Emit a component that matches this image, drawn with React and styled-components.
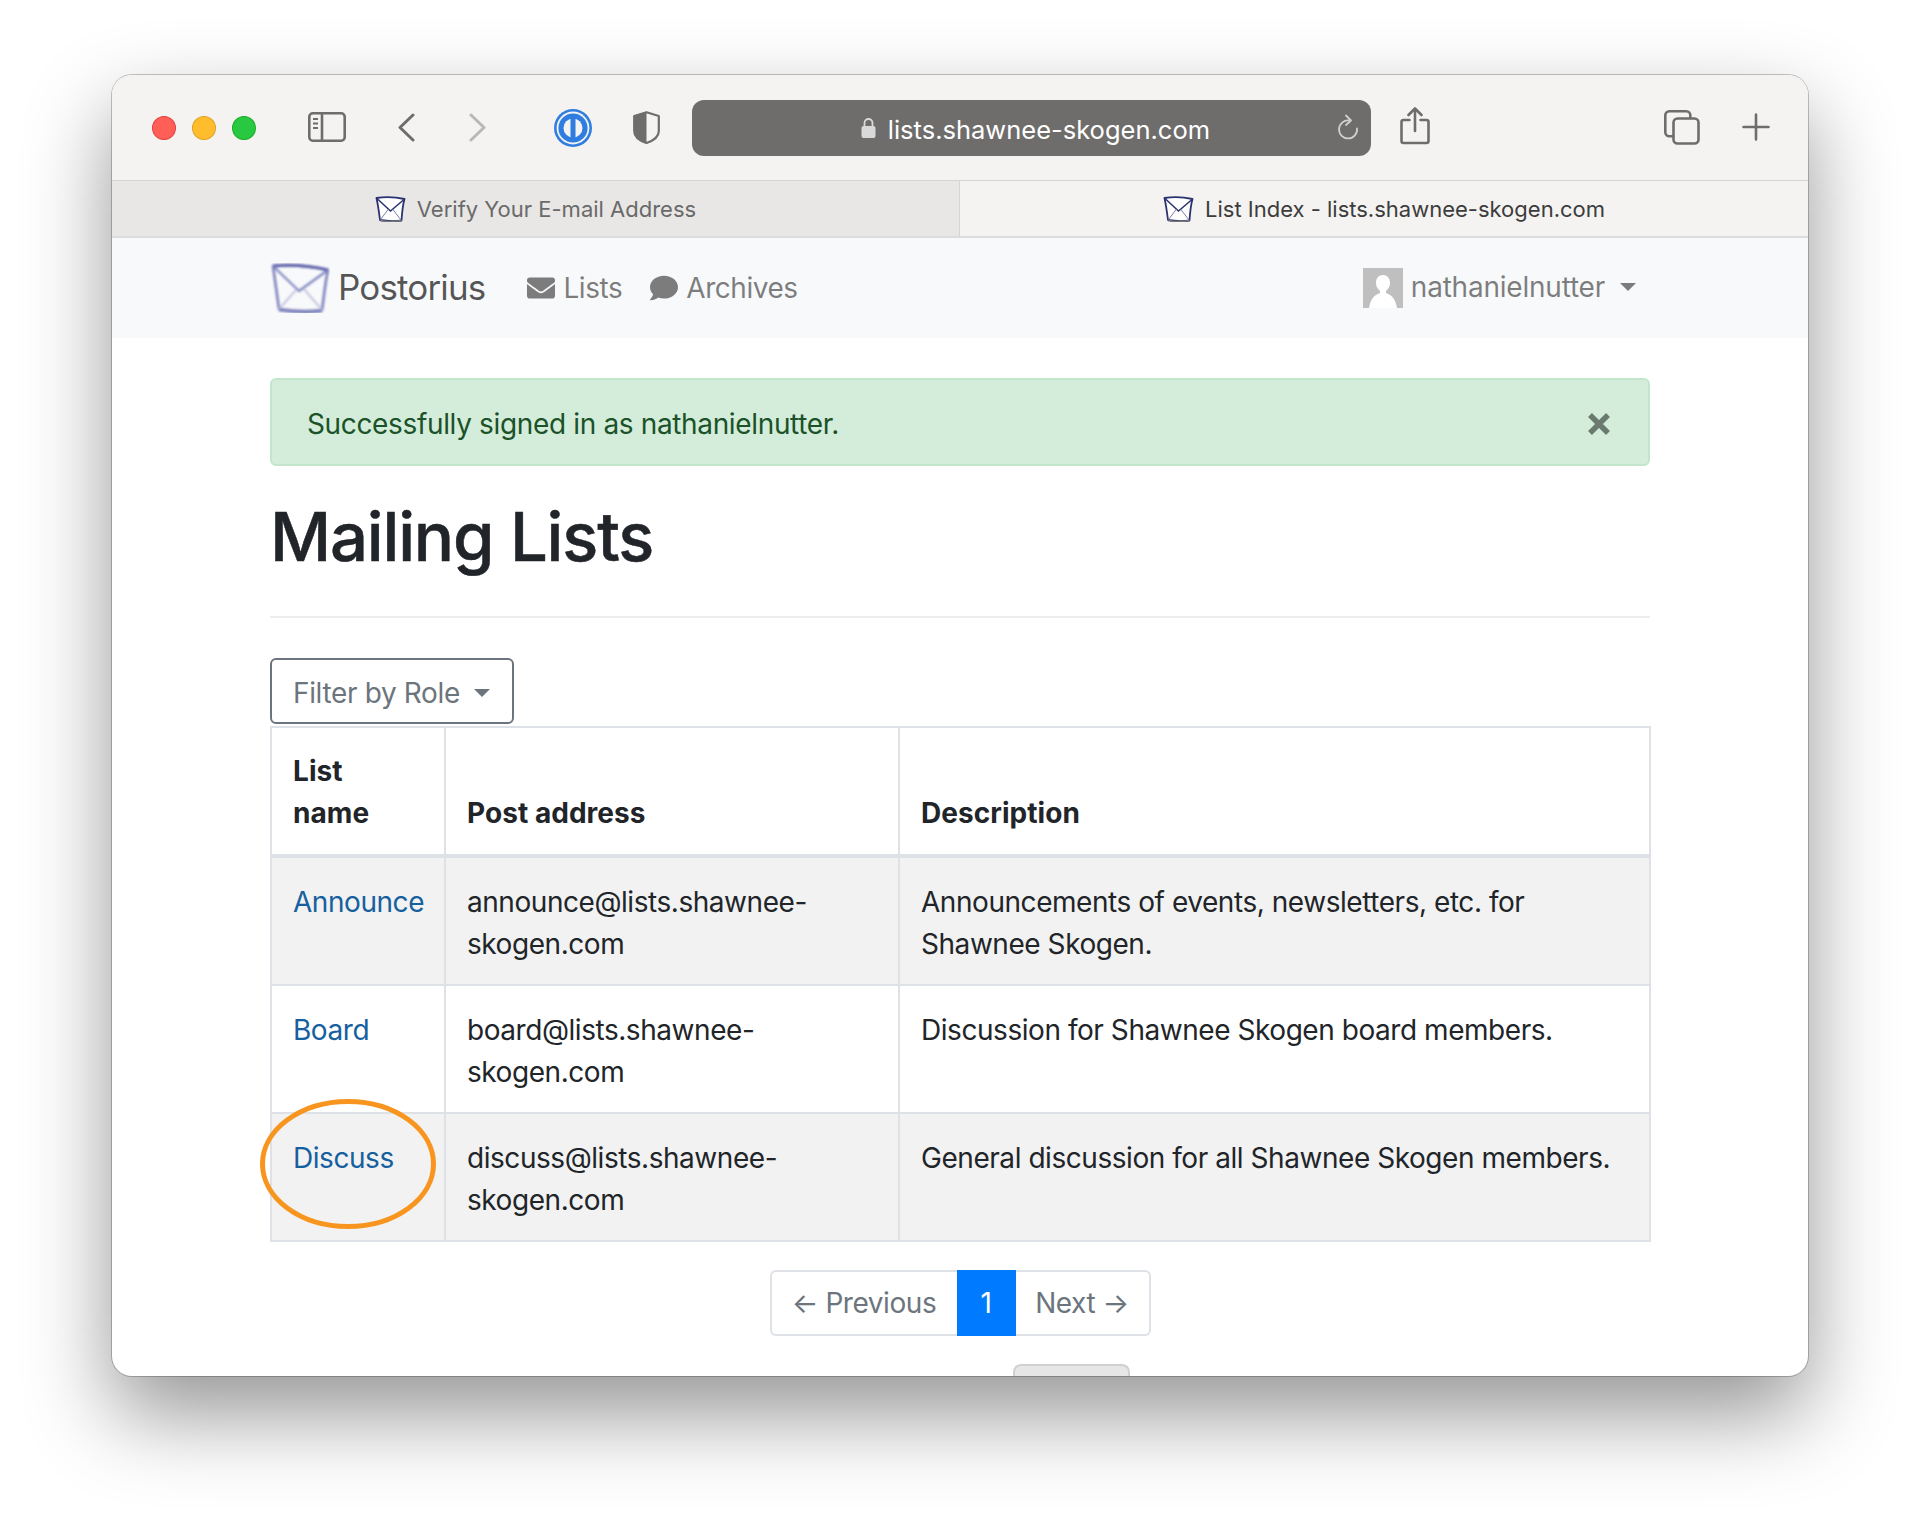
import styled, { createGlobalStyle } from "styled-components";
import { FaEnvelope, FaComment } from "react-icons/fa";

const Global = createGlobalStyle`
  html, body { margin: 0; background: #fff; }
  body { font-family: Inter, "Liberation Sans", sans-serif; color: #212529; }
  * { box-sizing: border-box; }
`;

const Page = styled.div`
  width: 1920px;
  height: 1524px;
  padding: 75px 112px 0;
  overflow: hidden;
`;

const Window = styled.div`
  width: 1696px;
  height: 1301px;
  border-radius: 20px;
  background: #fff;
  overflow: hidden;
  box-shadow: 0 0 0 1px rgba(0, 0, 0, .22), 0 38px 85px rgba(0, 0, 0, .42);
`;

const Toolbar = styled.div`
  height: 105px;
  background: #f4f3f1;
  display: flex;
  align-items: flex-start;
  padding: 25px 38px 0 40px;
  position: relative;
`;

const Light = styled.span`
  width: 24px;
  height: 24px;
  margin: 16px 16px 0 0;
  border-radius: 50%;
  background: ${p => p.$color};
  border: 1px solid ${p => p.$edge};
`;

const ToolIcon = styled.svg`
  display: block;
  flex: none;
  margin-left: ${p => p.$ml}px;
  margin-top: ${p => p.$mt}px;
`;

const UrlBar = styled.div`
  width: 681px;
  height: 56px;
  margin-left: 32px;
  border-radius: 12px;
  background: #6e6d6b;
  color: #fff;
  display: flex;
  align-items: center;
  justify-content: center;
  gap: 12px;
  font-size: 25.5px;
  padding: 3px 0 0 8px;
  position: relative;
`;

const Reload = styled.svg`
  position: absolute;
  right: 12px;
  top: 14px;
`;

const Tabs = styled.div`
  height: 58px;
  display: flex;
  background: #f4f3f1;
  border-top: 1px solid #d4d3d1;
  border-bottom: 2px solid #dcdcdc;
`;

const Tab = styled.div`
  width: 848px;
  display: flex;
  align-items: center;
  justify-content: center;
  gap: 11px;
  font-size: 22px;
  color: ${p => p.$active ? "#3c3c3c" : "#6a6a6a"};
  background: ${p => p.$active ? "#f4f3f1" : "#e8e7e5"};
  border-right: ${p => p.$active ? "none" : "1px solid #d6d5d3"};
`;

const Nav = styled.div`
  height: 100px;
  background: #f8f9fa;
  display: flex;
  align-items: center;
  padding: 0 172px 0 158px;
  color: rgba(0, 0, 0, .5);
`;

const Brand = styled.div`
  display: flex;
  align-items: center;
  gap: 8px;
  font-size: 35px;
  letter-spacing: -.85px;
  color: rgba(0, 0, 0, .66);
  margin-right: 42px;
`;

const BrandText = styled.span`
  margin-top: -2px;
`;

const NavLink = styled.div`
  display: flex;
  align-items: center;
  gap: 8px;
  font-size: 28px;
  letter-spacing: -.45px;
  margin-right: 28px;
  svg { font-size: 28px; }
`;

const User = styled.div`
  margin-left: auto;
  display: flex;
  align-items: center;
  font-size: 28px;
  letter-spacing: -.22px;
  margin-top: -2px;
`;

const Avatar = styled.svg`
  margin-right: 8px;
  margin-top: 2px;
  display: block;
`;

const Caret = styled.span`
  display: inline-block;
  border-top: 8px solid ${p => p.$color};
  border-left: 8px solid transparent;
  border-right: 8px solid transparent;
  margin-left: ${p => p.$ml}px;
`;

const Main = styled.div`
  padding: 40px 158px 0;
`;

const Alert = styled.div`
  height: 88px;
  background: #d4edda;
  border: 2px solid #c3e6cb;
  border-radius: 6px;
  color: #1b5229;
  font-size: 28px;
  letter-spacing: -.35px;
  display: flex;
  align-items: center;
  justify-content: space-between;
  padding: 4px 37px 0 35px;
`;

const Close = styled.svg`
  display: block;
`;

const Title = styled.h1`
  margin: 31px 0 0;
  font-size: 67px;
  font-weight: 500;
  line-height: 80px;
  letter-spacing: -1.2px;
  -webkit-text-stroke: .5px #212529;
`;

const Rule = styled.div`
  margin-top: 39px;
  height: 2px;
  background: #eceded;
`;

const FilterButton = styled.div`
  margin-top: 40px;
  width: 244px;
  height: 66px;
  border: 2px solid #6c757d;
  border-radius: 6px;
  color: #6c757d;
  font-size: 28px;
  letter-spacing: -.35px;
  display: flex;
  align-items: center;
  padding: 3px 0 0 21px;
`;

const Table = styled.table`
  margin-top: 2px;
  width: 1379px;
  border-collapse: collapse;
  table-layout: fixed;
  font-size: 28px;
  line-height: 42px;
  letter-spacing: -.45px;
`;

const Th = styled.th`
  width: ${p => p.$w}px;
  text-align: left;
  vertical-align: bottom;
  font-weight: 700;
  letter-spacing: .05px;
  padding: 22px 21px 20px;
  border: 2px solid #dee2e6;
  border-bottom-width: 4px;
`;

const Row = styled.tr`
  background: ${p => p.$striped ? "#f2f2f2" : "#fff"};
`;

const Td = styled.td`
  vertical-align: top;
  padding: 23px 21px 19px;
  border: 2px solid #dee2e6;
  position: relative;
`;

const ListLink = styled.a`
  color: #16609f;
  text-decoration: none;
`;

const Circle = styled.svg`
  position: absolute;
  left: -12px;
  top: -15px;
  pointer-events: none;
`;

const Pager = styled.div`
  margin-top: 28px;
  display: flex;
  justify-content: center;
  font-size: 28px;
  letter-spacing: -.45px;
`;

const PageItem = styled.div`
  height: 66px;
  width: ${p => p.$w}px;
  display: flex;
  align-items: center;
  justify-content: center;
  color: ${p => p.$active ? "#fff" : "#6c757d"};
  background: ${p => p.$active ? "#007bff" : "#fff"};
  border: ${p => p.$active ? "none" : "2px solid #dee2e6"};
  border-left-width: ${p => p.$side === "right" ? 0 : 2}px;
  border-right-width: ${p => p.$side === "left" ? 0 : 2}px;
  border-radius: ${p => p.$side === "left" ? "6px 0 0 6px" : p.$side === "right" ? "0 6px 6px 0" : "0"};
`;

const Peek = styled.div`
  margin: 28px 0 0 743px;
  width: 117px;
  height: 20px;
  background: #e6e6e6;
  border: 2px solid #d0d0d0;
  border-bottom: none;
  border-radius: 8px 8px 0 0;
`;

function Favicon() {
  return (
    <svg width="31" height="26" viewBox="0 0 31 26" style={{ display: "block", flex: "none" }}>
      <path d="M1.500 2C10 .8 21 1.200 29.500 3 27.500 10 27 17 26.500 24.500 19 25.500 11 25 5 24 4 16 3 9 1.500 2Z" fill="#fff" stroke="#2b3270" strokeWidth="1.800" strokeLinejoin="round" />
      <path d="M2 2.500 15.500 15 29 3.500" fill="none" stroke="#2b3270" strokeWidth="1.500" />
      <path d="M5.500 23.500 13.500 13M26 24 17.500 13" fill="none" stroke="#6c7099" strokeWidth=".9" />
      <path d="M5.500 24.500C11 25.800 19 25.800 26.500 24.500" fill="none" stroke="#777" strokeWidth="1.500" />
    </svg>
  );
}

function BrandMark() {
  return (
    <svg width="60" height="50" viewBox="0 0 60 50" style={{ display: "block", flex: "none" }}>
      <defs>
        <filter id="soft" x="-10%" y="-10%" width="120%" height="120%"><feGaussianBlur stdDeviation="0.9" /></filter>
      </defs>
      <g fill="none" filter="url(#soft)" strokeLinejoin="round">
        <path d="M3 3C20 1.500 41 3 58 7 55 20 54 34 52 47 38 49 22 48 9 46 7 32 5 18 3 3Z" stroke="#7d82bd" strokeWidth="2.600" />
        <path d="M3 3C20 1.500 41 3 58 7" stroke="#5b61a8" strokeWidth="3" />
        <path d="M3 3 29 28 58 7" stroke="#8287c2" strokeWidth="2.200" />
        <path d="M9 46 26 27M52 47 34 26" stroke="#c5c7e0" strokeWidth="2" />
        <path d="M9 47C22 49 38 50 52 48" stroke="#7d82bd" strokeWidth="3" />
      </g>
    </svg>
  );
}

const rows = [
  ["Announce", "announce@lists.shawnee-skogen.com", "Announcements of events, newsletters, etc. for Shawnee Skogen."],
  ["Board", "board@lists.shawnee-skogen.com", "Discussion for Shawnee Skogen board members."],
  ["Discuss", "discuss@lists.shawnee-skogen.com", "General discussion for all Shawnee Skogen members."],
];

export default function App() {
  return (
    <Page>
      <Global />
      <Window>
        <Toolbar>
          <Light $color="#ff5f57" $edge="#e0443e" />
          <Light $color="#ffbd2e" $edge="#dea123" />
          <Light $color="#28c940" $edge="#1aab29" />
          <ToolIcon $ml={36} $mt={12} width="38" height="30" viewBox="0 0 38 30" fill="none" stroke="#6e6d6b" strokeWidth="2.600">
            <rect x="1.300" y="1.300" width="35.400" height="27.400" rx="3.500" />
            <path d="M14 1v28" />
            <path d="M5 7h5M5 11.500h5M5 16h5" strokeWidth="2" />
          </ToolIcon>
          <ToolIcon $ml={52} $mt={13} width="17" height="29" viewBox="0 0 17 29" fill="none" stroke="#6e6d6b" strokeWidth="3" strokeLinecap="round" strokeLinejoin="round">
            <path d="M15 2 2 14.500 15 27" />
          </ToolIcon>
          <ToolIcon $ml={54} $mt={13} width="17" height="29" viewBox="0 0 17 29" fill="none" stroke="#b9b8b6" strokeWidth="3" strokeLinecap="round" strokeLinejoin="round">
            <path d="M2 2 15 14.500 2 27" />
          </ToolIcon>
          <ToolIcon $ml={68} $mt={9} width="38" height="38" viewBox="0 0 38 38">
            <circle cx="19" cy="19" r="19" fill="#2f7de1" />
            <circle cx="19" cy="19" r="16.400" fill="#f4f3f1" />
            <circle cx="19" cy="19" r="14.600" fill="#2f7de1" />
            <circle cx="19" cy="19" r="9.500" fill="#f4f3f1" />
            <rect x="16.500" y="9" width="5" height="20" rx="1" fill="#2f7de1" />
          </ToolIcon>
          <ToolIcon $ml={41} $mt={11} width="27" height="33" viewBox="0 0 27 33">
            <path d="M13.500 1.200 25.800 5v15c0 5-5 9.500-12.300 12C6 29.500 1.200 25 1.200 20V5Z" fill="#f4f3f1" stroke="#6e6d6b" strokeWidth="2.200" strokeLinejoin="round" />
            <path d="M13.500 1.200V32C6 29.500 1.200 25 1.200 20V5Z" fill="#6e6d6b" />
          </ToolIcon>
          <UrlBar>
            <svg width="15" height="22" viewBox="0 0 15 22" style={{ display: "block", marginTop: -3 }}>
              <path d="M3.500 10V6a4 4 0 0 1 8 0v4" fill="none" stroke="#d9d9d9" strokeWidth="1.800" />
              <rect x="0.500" y="9" width="14" height="12" rx="2" fill="#d9d9d9" />
            </svg>
            lists.shawnee-skogen.com
            <Reload width="24" height="28" viewBox="0 0 24 28" fill="none" stroke="#cfcfce" strokeWidth="1.800" strokeLinecap="round" strokeLinejoin="round">
              <path d="M14 6.500a9 9 0 1 0 8 8" />
              <path d="M11 1.500 16 6.500 11 11" />
            </Reload>
          </UrlBar>
          <ToolIcon $ml={29} $mt={7} width="30" height="38" viewBox="0 0 30 38" fill="none" stroke="#6e6d6b" strokeWidth="2.600" strokeLinecap="round" strokeLinejoin="round">
            <path d="M9.500 13H3.500a2 2 0 0 0-2 2v19a2 2 0 0 0 2 2h23a2 2 0 0 0 2-2V15a2 2 0 0 0-2-2h-6" />
            <path d="M15 24V2M8.500 8 15 1.500 21.500 8" />
          </ToolIcon>
          <ToolIcon $ml={234} $mt={10} width="36" height="35" viewBox="0 0 36 35" fill="none" stroke="#6e6d6b" strokeWidth="2.600">
            <rect x="1.300" y="1.300" width="25" height="25" rx="4" />
            <rect x="9.500" y="8.500" width="25" height="25" rx="4" fill="#f4f3f1" />
          </ToolIcon>
          <ToolIcon $ml={42} $mt={13} width="28" height="28" viewBox="0 0 28 28" fill="none" stroke="#6e6d6b" strokeWidth="2.600" strokeLinecap="round">
            <path d="M14 1.500v25M1.500 14h25" />
          </ToolIcon>
        </Toolbar>
        <Tabs>
          <Tab>
            <Favicon />
            Verify Your E-mail Address
          </Tab>
          <Tab $active>
            <Favicon />
            List Index - lists.shawnee-skogen.com
          </Tab>
        </Tabs>
        <Nav>
          <Brand>
            <BrandMark />
            <BrandText>Postorius</BrandText>
          </Brand>
          <NavLink><FaEnvelope />Lists</NavLink>
          <NavLink><FaComment />Archives</NavLink>
          <User>
            <Avatar width="40" height="40" viewBox="0 0 40 40">
              <rect width="40" height="40" fill="#bfbfbf" />
              <path d="M20 7c5 0 7 4 7 8 0 4-2 6-4 8v2c5 2 9 4 11 15H6c2-11 6-13 11-15v-2c-2-2-4-4-4-8 0-4 2-8 7-8Z" fill="#fff" />
            </Avatar>
            nathanielnutter
            <Caret $color="rgba(0,0,0,.5)" $ml={15} />
          </User>
        </Nav>
        <Main>
          <Alert>
            Successfully signed in as nathanielnutter.
            <Close width="24" height="24" viewBox="0 0 24 24" stroke="#6b7a6f" strokeWidth="5.500">
              <path d="M3 3 21 21M21 3 3 21" />
            </Close>
          </Alert>
          <Title>Mailing Lists</Title>
          <Rule />
          <FilterButton>
            Filter by Role
            <Caret $color="#6c757d" $ml={14} />
          </FilterButton>
          <Table>
            <thead>
              <tr>
                <Th $w={174}>List<br />name</Th>
                <Th $w={454}>Post address</Th>
                <Th $w={751}>Description</Th>
              </tr>
            </thead>
            <tbody>
              {rows.map((row, i) => (
                <Row key={row[0]} $striped={i !== 1}>
                  <Td>
                    <ListLink href="#">{row[0]}</ListLink>
                    {row[0] === "Discuss" && (
                      <Circle width="180" height="134" viewBox="0 0 180 134" fill="none" stroke="#f7951f" strokeWidth="5">
                        <ellipse cx="88" cy="65" rx="85.500" ry="62.500" />
                      </Circle>
                    )}
                  </Td>
                  <Td>{row[1]}</Td>
                  <Td>{row[2]}</Td>
                </Row>
              ))}
            </tbody>
          </Table>
          <Pager>
            <PageItem $w={187} $side="left">← Previous</PageItem>
            <PageItem $w={59} $active>1</PageItem>
            <PageItem $w={135} $side="right">Next →</PageItem>
          </Pager>
          <Peek />
        </Main>
      </Window>
    </Page>
  );
}
